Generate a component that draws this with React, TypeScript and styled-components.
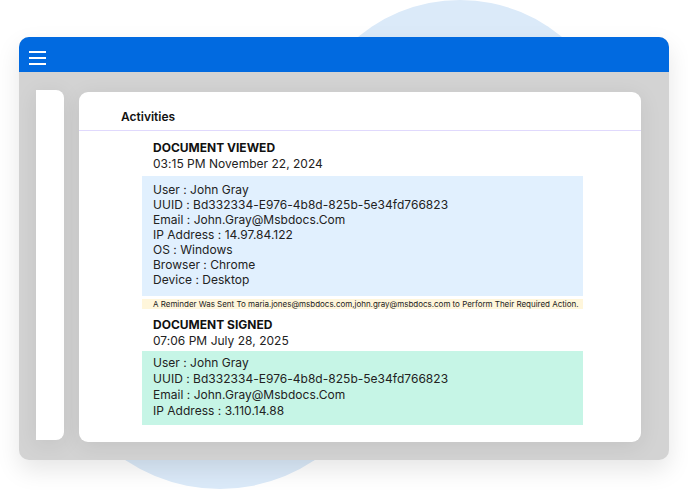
import React from "react";
import styled, { createGlobalStyle } from "styled-components";

const Global = createGlobalStyle`
  html, body { margin: 0; padding: 0; background: #fff; }
  body { font-family: "Inter", "Liberation Sans", sans-serif; color: #1c1c1c; }
`;

const Stage = styled.div`
  position: relative;
  width: 688px;
  height: 490px;
  overflow: hidden;
  padding: 37px 19px 0;
  box-sizing: border-box;
`;

const Blob = styled.div<{ $x: number; $y: number; $r: number }>`
  position: absolute;
  left: ${(p) => p.$x - p.$r}px;
  top: ${(p) => p.$y - p.$r}px;
  width: ${(p) => p.$r * 2}px;
  height: ${(p) => p.$r * 2}px;
  border-radius: 50%;
  background: #dbeaf9;
`;

const Window = styled.div`
  position: relative;
  width: 650px;
  height: 423px;
  border-radius: 10px;
  background: #d3d3d3;
  box-shadow: 0 10px 24px rgba(0, 0, 0, 0.1);
  display: flex;
  flex-direction: column;
  overflow: hidden;
`;

const TopBar = styled.header`
  height: 35px;
  flex: none;
  box-sizing: border-box;
  background: #016ae0;
  display: flex;
  align-items: center;
  padding: 7px 0 0 10px;
`;

const Burger = styled.div`
  width: 17px;
  display: flex;
  flex-direction: column;
  gap: 4.5px;
  span {
    display: block;
    height: 1.5px;
    background: #fff;
  }
`;

const Body = styled.div`
  flex: 1;
  display: flex;
  align-items: flex-start;
  padding: 18px 28px 0 17px;
`;

const Sidebar = styled.aside`
  width: 28px;
  height: 350px;
  flex: none;
  background: #fff;
  border-radius: 0 8px 8px 0;
  box-shadow: 0 4px 22px rgba(0, 0, 0, 0.08);
`;

const Main = styled.main`
  width: 562px;
  height: 350px;
  flex: none;
  margin: 2px 0 0 15px;
  background: #fff;
  border-radius: 9px;
  box-shadow: 0 4px 22px rgba(0, 0, 0, 0.08);
  box-sizing: border-box;
`;

const PanelTitle = styled.h2`
  margin: 0;
  height: 39px;
  box-sizing: border-box;
  padding: 17px 0 0 42px;
  font-size: 12px;
  line-height: 15px;
  font-weight: 600;
  color: #111;
  border-bottom: 1px solid #e0d9fd;
`;

const Activity = styled.section`
  padding: 9px 58px 0 63px;
`;

const EventHead = styled.div`
  padding-left: 11px;
`;

const EventTitle = styled.div`
  font-size: 12px;
  line-height: 16px;
  font-weight: 700;
  color: #111;
`;

const EventTime = styled.div`
  font-size: 12px;
  line-height: 16px;
  letter-spacing: 0.02px;
  color: #222;
`;

const DetailBox = styled.div<{ $tone: "blue" | "green"; $h: number; $top: number; $pad: number }>`
  height: ${(p) => p.$h}px;
  box-sizing: border-box;
  padding: ${(p) => p.$pad}px 11px 0;
  margin-top: ${(p) => p.$top}px;
  background: ${(p) => (p.$tone === "blue" ? "#e1f0fe" : "#c6f5e6")};
`;

const DetailLine = styled.div<{ $lh: number }>`
  font-size: 12px;
  line-height: ${(p) => p.$lh}px;
  letter-spacing: 0.02px;
  color: #222;
  white-space: nowrap;
`;

const Reminder = styled.div`
  margin-top: 3px;
  height: 10px;
  padding-left: 11px;
  background: #fff6db;
  font-size: 8px;
  line-height: 10px;
  letter-spacing: -0.02px;
  color: #222;
  white-space: nowrap;
`;

const SecondEvent = styled.div`
  margin-top: 8px;
`;

const viewed = [
  "User : John Gray",
  "UUID : Bd332334-E976-4b8d-825b-5e34fd766823",
  "Email : John.Gray@Msbdocs.Com",
  "IP Address : 14.97.84.122",
  "OS : Windows",
  "Browser : Chrome",
  "Device : Desktop",
];

const signed = [
  "User : John Gray",
  "UUID : Bd332334-E976-4b8d-825b-5e34fd766823",
  "Email : John.Gray@Msbdocs.Com",
  "IP Address : 3.110.14.88",
];

export default function App() {
  return (
    <Stage>
      <Global />
      <Blob $x={460} $y={159} $r={159} />
      <Blob $x={220} $y={319} $r={170} />
      <Window>
        <TopBar>
          <Burger>
            <span />
            <span />
            <span />
          </Burger>
        </TopBar>
        <Body>
          <Sidebar />
          <Main>
            <PanelTitle>Activities</PanelTitle>
            <Activity>
              <EventHead>
                <EventTitle>DOCUMENT VIEWED</EventTitle>
                <EventTime>03:15 PM November 22, 2024</EventTime>
              </EventHead>
              <DetailBox $tone="blue" $h={120} $top={4} $pad={6}>
                {viewed.map((l) => (
                  <DetailLine key={l} $lh={15}>{l}</DetailLine>
                ))}
              </DetailBox>
              <Reminder>
                A Reminder Was Sent To maria.jones@msbdocs.com,john.gray@msbdocs.com to Perform Their Required Action.
              </Reminder>
              <SecondEvent>
                <EventHead>
                  <EventTitle>DOCUMENT SIGNED</EventTitle>
                  <EventTime>07:06 PM July 28, 2025</EventTime>
                </EventHead>
                <DetailBox $tone="green" $h={74} $top={2} $pad={4}>
                  {signed.map((l) => (
                    <DetailLine key={l} $lh={16}>{l}</DetailLine>
                  ))}
                </DetailBox>
              </SecondEvent>
            </Activity>
          </Main>
        </Body>
      </Window>
    </Stage>
  );
}
